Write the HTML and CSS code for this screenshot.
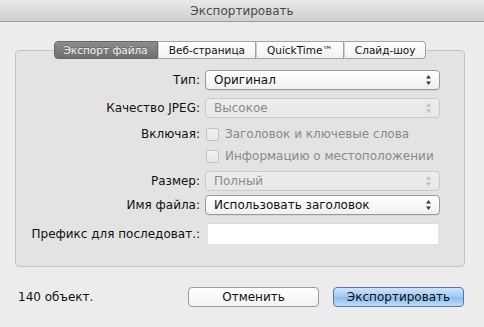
FILE: index.html
```html
<!DOCTYPE html>
<html lang="ru">

<head>
    <meta charset="UTF-8">
    <title>Экспортировать</title>
    <link rel="stylesheet" href="styles.css">
</head>

<body>
    <div class="window">
        <div class="titlebar">Экспортировать</div>

        <div class="group">
            <div class="tabs">
                <div class="tab active">Экспорт файла</div>
                <div class="tab">Веб-страница</div>
                <div class="tab">QuickTime™</div>
                <div class="tab">Слайд-шоу</div>
            </div>

            <div class="row r-type">
                <label>Тип:</label>
                <div class="popup">
                    <span>Оригинал</span>
                    <svg class="arrows" width="5" height="10" viewBox="0 0 5 10">
                        <path d="M2.5 0 L5 3.5 L0 3.5 Z M0 6.5 L5 6.5 L2.5 10 Z" />
                    </svg>
                </div>
            </div>

            <div class="row r-quality">
                <label>Качество JPEG:</label>
                <div class="popup disabled">
                    <span>Высокое</span>
                    <svg class="arrows" width="5" height="10" viewBox="0 0 5 10">
                        <path d="M2.5 0 L5 3.5 L0 3.5 Z M0 6.5 L5 6.5 L2.5 10 Z" />
                    </svg>
                </div>
            </div>

            <div class="row r-check1">
                <label>Включая:</label>
                <div class="check disabled"><span class="box"></span>Заголовок и ключевые слова</div>
            </div>

            <div class="row r-check2">
                <label></label>
                <div class="check disabled"><span class="box"></span>Информацию о местоположении</div>
            </div>

            <div class="row r-size">
                <label>Размер:</label>
                <div class="popup disabled">
                    <span>Полный</span>
                    <svg class="arrows" width="5" height="10" viewBox="0 0 5 10">
                        <path d="M2.5 0 L5 3.5 L0 3.5 Z M0 6.5 L5 6.5 L2.5 10 Z" />
                    </svg>
                </div>
            </div>

            <div class="row r-name">
                <label>Имя файла:</label>
                <div class="popup">
                    <span>Использовать заголовок</span>
                    <svg class="arrows" width="5" height="10" viewBox="0 0 5 10">
                        <path d="M2.5 0 L5 3.5 L0 3.5 Z M0 6.5 L5 6.5 L2.5 10 Z" />
                    </svg>
                </div>
            </div>

            <div class="row r-prefix">
                <label>Префикс для последоват.:</label>
                <input type="text" class="field">
            </div>
        </div>

        <div class="footer">
            <span class="count">140 объект.</span>
            <button class="btn">Отменить</button>
            <button class="btn btn-default">Экспортировать</button>
        </div>
    </div>
</body>

</html>
```

FILE: styles.css
```css
* {
    margin: 0;
    padding: 0;
    box-sizing: border-box;
    font-family: 'DejaVu Sans', sans-serif;
}

body {
    width: 484px;
    height: 327px;
    overflow: hidden;
    background: #ececec;
}

.window {
    height: 327px;
    background: #ececec;
    font-size: 12px;
    color: #111;
}

.titlebar {
    height: 22px;
    line-height: 22px;
    text-align: center;
    font-size: 12px;
    color: #4a4a4a;
    background: linear-gradient(#e9e9e9, #cfcfcf);
    border-bottom: 1px solid #9d9d9d;
}

.group {
    margin: 28px 0 0 15px;
    width: 450px;
    border: 1px solid #c4c4c4;
    border-radius: 4px;
    background: #e3e3e3;
    padding-bottom: 22px;
}

.tabs {
    display: flex;
    justify-content: center;
    margin-top: -10px;
    margin-bottom: 11px;
}

.tab {
    height: 18px;
    line-height: 16px;
    font-size: 10.5px;
    padding: 0 10px;
    background: linear-gradient(#ffffff, #f1f1f1);
    border: 1px solid #a2a2a2;
    border-left: 1px solid #d0d0d0;
    color: #111;
}

.tab:first-child {
    border-left: 1px solid #6e6e6e;
    border-radius: 4px 0 0 4px;
}

.tab:last-child {
    border-radius: 0 4px 4px 0;
}

.tab.active {
    background: linear-gradient(#8c8c8c, #6f6f6f);
    border-color: #676767;
    color: #f4f4f4;
    padding: 0 9px;
    text-shadow: 0 -1px 0 rgba(0, 0, 0, 0.25);
}

.row {
    display: grid;
    grid-template-columns: 184px 235px;
    column-gap: 5px;
    align-items: center;
}

.row label {
    text-align: right;
}

.r-quality {
    margin-top: 8px;
}

.r-check1 {
    margin-top: 5px;
}

.r-size,
.r-name {
    margin-top: 4px;
}

.r-prefix {
    margin-top: 8px;
}

.popup {
    height: 20px;
    display: flex;
    align-items: center;
    justify-content: space-between;
    padding: 0 8px 0 8px;
    border: 1px solid #9a9a9a;
    border-radius: 4px;
    background: linear-gradient(#ffffff, #f0f0f0);
    box-shadow: 0 1px 0 rgba(0, 0, 0, 0.06);
}

.popup .arrows {
    fill: #3a3a3a;
}

.popup.disabled {
    border-color: #c9c9c9;
    background: linear-gradient(#ededed, #e7e7e7);
    color: #8a8a8a;
    box-shadow: none;
}

.popup.disabled .arrows {
    fill: #bdbdbd;
}

.check {
    height: 22px;
    display: flex;
    align-items: center;
    gap: 6px;
    padding-left: 1px;
}

.check .box {
    width: 13px;
    height: 13px;
    border: 1px solid #c2c2c2;
    border-radius: 2px;
    background: linear-gradient(#f2f2f2, #e8e8e8);
}

.check.disabled {
    color: #8a8a8a;
}

.field {
    height: 21px;
    width: 230px;
    margin-left: 3px;
    border: none;
    border-top: 1px solid #dadada;
    background: #fff;
    outline: none;
}

.footer {
    display: flex;
    align-items: center;
    gap: 14px;
    margin-top: 20px;
    padding: 0 20px 0 18px;
}

.count {
    margin-right: auto;
}

.btn {
    width: 131px;
    height: 20px;
    font-size: 12px;
    border: 1px solid #9b9b9b;
    border-radius: 4px;
    background: linear-gradient(#ffffff, #f1f1f1);
    color: #111;
}

.btn-default {
    border-color: #5b76a6;
    background: linear-gradient(#cfe4fb 0%, #9fc8f2 50%, #8bbcef 51%, #bfdcf8 100%);
}
```
